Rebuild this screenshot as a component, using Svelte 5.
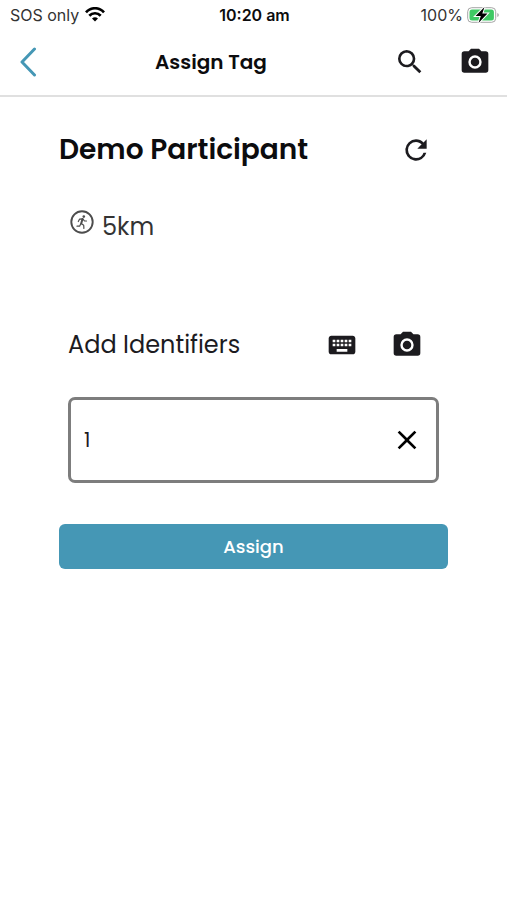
<script>
	let participant = $state({ name: 'Demo Participant', event: '5km' });
	let identifier = $state('1');
</script>

<svelte:head>
	<title>Assign Tag</title>
</svelte:head>

{#snippet camera()}
	<svg class="icon" viewBox="0 0 24 24" fill="currentColor" aria-hidden="true"><path d="M9 2 7.2 4H4a2 2 0 0 0-2 2v12a2 2 0 0 0 2 2h16a2 2 0 0 0 2-2V6a2 2 0 0 0-2-2h-3.200L15 2zM12 17a5 5 0 1 1 0-10 5 5 0 0 1 0 10z" fill-rule="evenodd"/><circle cx="12" cy="12" r="3.200"/></svg>
{/snippet}

<div class="status">
	<div class="carrier">
		<span>SOS only</span>
		<svg width="20" height="15" viewBox="0 0 20 15" aria-hidden="true"><g fill="none" stroke="#000" stroke-width="2.700"><path d="M1 5.300C6-0.100 14-0.100 19 5.300"/><path d="M4.300 8.800C7.500 5.400 12.500 5.400 15.700 8.800"/></g><path d="M7 11.400Q10 8.900 13 11.400L10 14.500z"/></svg>
	</div>
	<time>10:20 am</time>
	<div class="battery">
		<span>100%</span>
		<svg width="32" height="18" viewBox="0 0 32 18" aria-hidden="true">
			<rect x="0.700" y="1.700" width="28" height="14.600" rx="4" fill="#fff" stroke="#a5a5a5"/>
			<rect x="2.500" y="3.500" width="24.400" height="11" rx="2.500" fill="#3fc964"/>
			<path d="M30.300 7v4q1.500-.6 1.500-2t-1.500-2" fill="#a5a5a5"/>
			<path d="M17.500 1 8.500 10h5.300L11.500 17l9-9.500h-5.200z" fill="#000" stroke="#fff" stroke-width="2" paint-order="stroke"/>
		</svg>
	</div>
</div>

<header>
	<button class="back" aria-label="Back">
		<svg width="18" height="30" viewBox="0 0 18 30" fill="none" stroke="#4597b5" stroke-width="3" stroke-linecap="round" stroke-linejoin="round"><path d="M15.500 2 3 15l12.500 13"/></svg>
	</button>
	<h1>Assign Tag</h1>
	<div class="actions">
		<button aria-label="Search">
			<svg class="icon" viewBox="0 0 24 24" fill="currentColor"><path d="M15.500 14h-.79l-.28-.27A6.470 6.470 0 0 0 16 9.500 6.500 6.500 0 1 0 9.500 16c1.610 0 3.090-.59 4.230-1.570l.27.28v.79l5 4.990L20.490 19l-4.990-5zm-6 0C7.010 14 5 11.990 5 9.500S7.010 5 9.500 5 14 7.010 14 9.500 11.990 14 9.500 14z"/></svg>
		</button>
		<button aria-label="Scan participant">{@render camera()}</button>
	</div>
</header>

<main>
	<div class="participant">
		<h2>{participant.name}</h2>
		<button aria-label="Refresh">
			<svg class="icon" viewBox="0 0 24 24" fill="currentColor"><path d="M17.650 6.350A7.958 7.958 0 0 0 12 4a8 8 0 1 0 7.730 10h-2.080A5.990 5.990 0 0 1 12 18a6 6 0 1 1 0-12c1.660 0 3.140.69 4.220 1.780L13 11h7V4z"/></svg>
		</button>
	</div>

	<div class="event">
		<svg width="24" height="24" viewBox="0 0 24 24" fill="none" stroke="#4d4d4d" stroke-linecap="round" stroke-linejoin="round" aria-hidden="true">
			<circle cx="12" cy="12" r="10.700" stroke-width="1.900"/>
			<circle cx="13.800" cy="6.600" r="1.300" fill="#4d4d4d" stroke="none"/>
			<path d="M12.500 9 11.200 13.500" stroke-width="2"/>
			<path d="M8.300 11.500 9.500 9.200 12.800 8.800 14.500 11h2M11.200 13.500l2.500 1.700.2 3.200M10.800 13.800l-1.200 2.400H7" stroke-width="1.200"/>
		</svg>
		<span>{participant.event}</span>
	</div>

	<form onsubmit={(e) => e.preventDefault()}>
		<div class="identifiers">
			<label for="identifier">Add Identifiers</label>
			<div class="actions">
				<button type="button" aria-label="Type identifier">
					<svg class="icon" viewBox="0 0 24 24" fill="currentColor"><path d="M20 5H4c-1.100 0-1.990.9-1.990 2L2 17c0 1.100.9 2 2 2h16c1.100 0 2-.9 2-2V7c0-1.100-.9-2-2-2zm-9 3h2v2h-2V8zm0 3h2v2h-2v-2zM8 8h2v2H8V8zm0 3h2v2H8v-2zm-1 2H5v-2h2v2zm0-3H5V8h2v2zm9 7H8v-2h8v2zm0-4h-2v-2h2v2zm0-3h-2V8h2v2zm3 3h-2v-2h2v2zm0-3h-2V8h2v2z"/></svg>
				</button>
				<button type="button" aria-label="Scan identifier">{@render camera()}</button>
			</div>
		</div>

		<div class="field">
			<input id="identifier" type="text" bind:value={identifier} />
			<button type="button" class="clear" aria-label="Clear" onclick={() => (identifier = '')}>
				<svg class="icon" viewBox="0 0 24 24" fill="currentColor"><path d="M19 6.410 17.590 5 12 10.590 6.410 5 5 6.410 10.590 12 5 17.590 6.410 19 12 13.410 17.590 19 19 17.590 13.410 12z"/></svg>
			</button>
		</div>

		<button class="assign" type="submit">Assign</button>
	</form>
</main>

<style>
	:global(body) {
		background: #fff;
		color: #0c0c0e;
		font-family: Poppins, Inter, sans-serif;
	}

	button {
		display: flex;
		padding: 0;
		border: 0;
		background: none;
		color: #1c1b1f;
		font: inherit;
		cursor: pointer;
	}

	svg { display: block; }

	.icon {
		width: 32px;
		height: 32px;
	}

	.status {
		display: grid;
		grid-template-columns: 1fr auto 1fr;
		align-items: center;
		height: 29px;
		padding: 0 8px 0 10px;
		font-family: Inter, sans-serif;
		font-size: 16px;
		line-height: 18px;
	}
	.status time { font-weight: 600; }

	.carrier,
	.battery {
		display: flex;
		align-items: center;
		gap: 6px;
		color: #333;
	}
	.battery {
		justify-content: flex-end;
		gap: 4px;
	}

	header {
		display: flex;
		align-items: center;
		height: 66px;
		padding: 0 16px 0 19px;
		border-bottom: 2px solid #e0e0e0;
	}
	header h1 {
		flex: 1;
		margin: 0;
		font-size: 20px;
		font-weight: 600;
		text-align: center;
	}
	.back { width: 37px; }

	.actions {
		display: flex;
		gap: 33px;
	}
	header .actions { margin-left: 28px; }

	main { padding: 32px 59px; }

	.participant,
	.identifiers {
		display: flex;
		align-items: center;
		justify-content: space-between;
		padding-right: 16px;
	}
	.participant h2 {
		margin: 0;
		font-size: 28px;
		font-weight: 600;
		line-height: 42px;
	}

	.event {
		display: flex;
		gap: 8px;
		margin: 39px 11px 0;
		color: #333;
		font-size: 24px;
		line-height: 34px;
	}

	.identifiers {
		margin-top: 84px;
		padding-left: 9px;
		padding-right: 25px;
	}
	.identifiers label {
		color: #1c1b1f;
		font-size: 24px;
		line-height: 34px;
	}

	.field {
		display: flex;
		align-items: center;
		height: 80px;
		margin: 35px 9px 0;
		padding: 0 13px;
		border: 3px solid #7d7d7d;
		border-radius: 7px;
	}
	.field input {
		flex: 1;
		min-width: 0;
		height: 100%;
		padding: 0;
		border: 0;
		outline: 0;
		background: none;
		color: #1c1b1f;
		font: inherit;
		font-size: 20px;
	}
	.clear { color: #000; }

	.assign {
		justify-content: center;
		width: 100%;
		margin-top: 41px;
		border-radius: 6px;
		background: #4597b5;
		color: #fff;
		font-size: 18px;
		font-weight: 500;
		line-height: 45px;
	}
</style>
